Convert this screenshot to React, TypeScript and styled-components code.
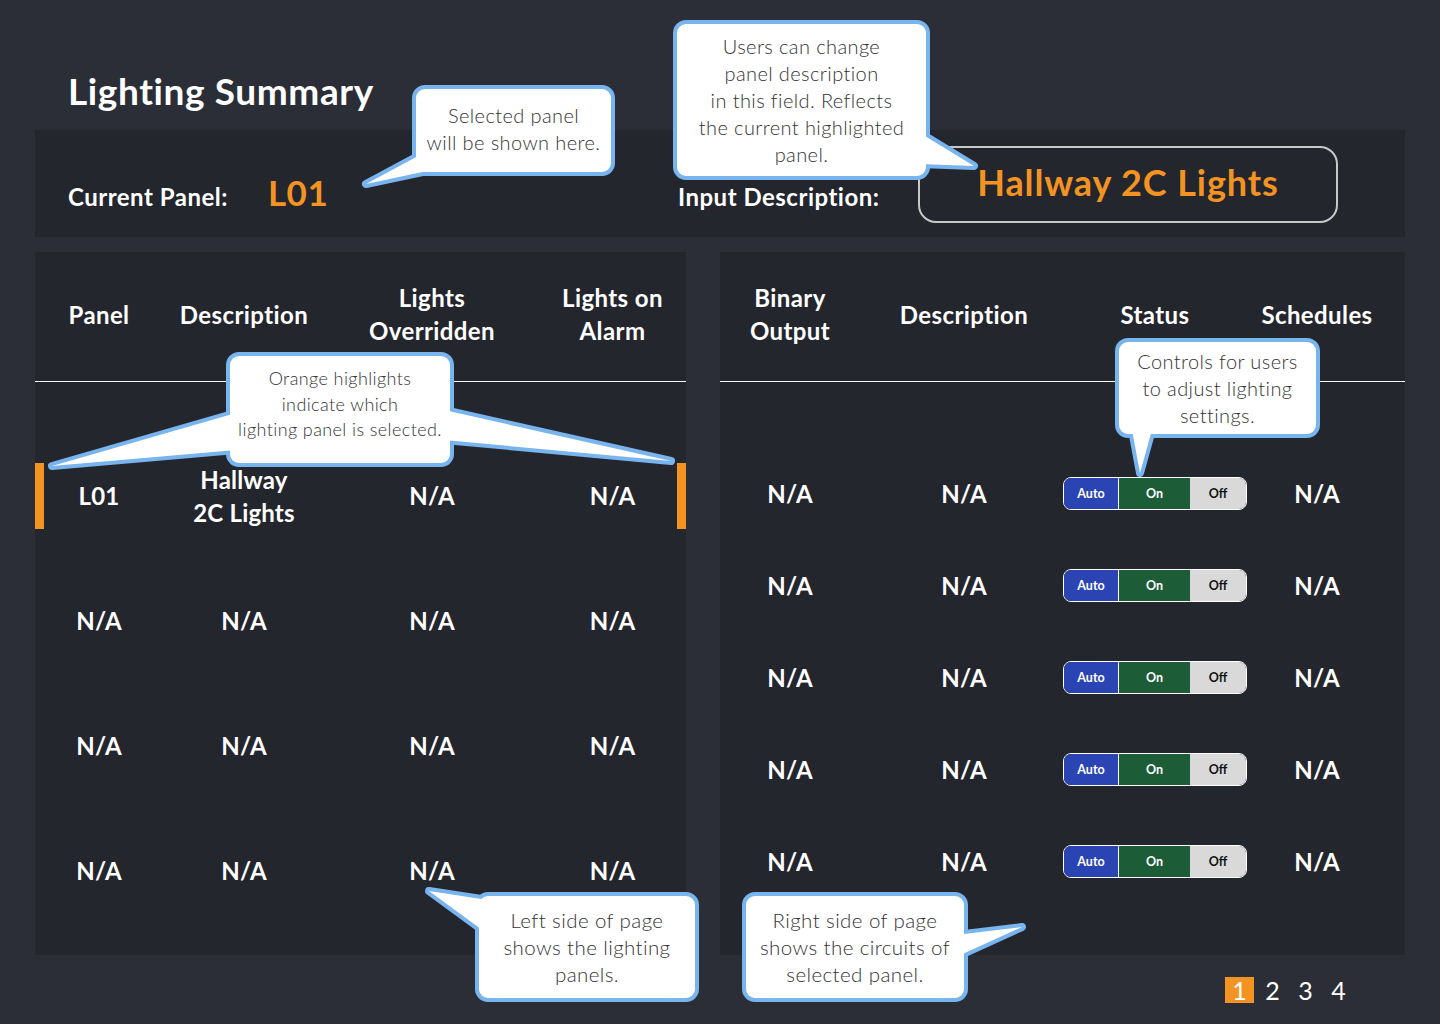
import React from 'react';
import styled, { createGlobalStyle } from 'styled-components';

const ORANGE = '#f39322';
const PAGE_BG = '#2b2e37';
const PANEL_BG = '#24262e';
const CALLOUT_BLUE = '#78b4ee';

const GlobalStyle = createGlobalStyle`
  html, body { margin: 0; padding: 0; background: ${PAGE_BG}; }
  body { font-family: Lato, "Open Sans", "DejaVu Sans", sans-serif; color: #fff; }
  * { box-sizing: border-box; }
`;

const Page = styled.div`
  position: relative;
  width: 1440px;
  height: 1024px;
  padding: 0 35px;
  overflow: hidden;
  background: ${PAGE_BG};
`;

const Title = styled.h1`
  margin: 0 0 18px;
  padding: 69px 0 0 33px;
  font-size: 37px;
  line-height: 43px;
  font-weight: 700;
  letter-spacing: 0.6px;
  color: #fff;
`;

const HeaderCard = styled.section`
  display: flex;
  align-items: flex-end;
  height: 107px;
  padding: 0 67px 14px 33px;
  background: ${PANEL_BG};
`;

const Field = styled.div<{ $width: number; $drop: number }>`
  display: flex;
  align-items: baseline;
  gap: 40px;
  width: ${(p) => p.$width}px;
  margin-bottom: ${(p) => p.$drop}px;
`;

const FieldLabel = styled.span`
  font-size: 24px;
  line-height: 27px;
  font-weight: 700;
  letter-spacing: 0.5px;
`;

const PanelCode = styled.span`
  font-size: 35px;
  line-height: 41px;
  font-weight: 700;
  letter-spacing: 0.5px;
  color: ${ORANGE};
`;

const DescInput = styled.div`
  width: 420px;
  height: 77px;
  padding-bottom: 5px;
  border: 2px solid #c8c8c8;
  border-radius: 18px;
  display: flex;
  align-items: center;
  justify-content: center;
  font-size: 36px;
  letter-spacing: 0.9px;
  font-weight: 700;
  color: ${ORANGE};
`;

const Columns = styled.main`
  display: flex;
  gap: 34px;
  margin-top: 15px;
  height: 703px;
`;

const TablePanel = styled.section<{ $width: number }>`
  flex: 0 0 ${(p) => p.$width}px;
  background: ${PANEL_BG};
`;

const HeadRow = styled.div<{ $cols: string }>`
  display: grid;
  grid-template-columns: ${(p) => p.$cols};
  align-items: center;
  height: 130px;
  padding-bottom: 5px;
  border-bottom: 1px solid #ffffff;
`;

const HeadCell = styled.div`
  text-align: center;
  font-size: 24px;
  line-height: 33px;
  font-weight: 700;
  letter-spacing: 0.4px;
`;

const TableBody = styled.div<{ $top: number }>`
  padding-top: ${(p) => p.$top}px;
`;

const DataRow = styled.div<{ $cols: string; $height: number }>`
  display: grid;
  grid-template-columns: ${(p) => p.$cols};
  grid-template-rows: ${(p) => p.$height}px;
  align-items: center;
`;

const DataCell = styled.div<{ $col: number }>`
  grid-column: ${(p) => p.$col};
  grid-row: 1;
  justify-self: center;
  text-align: center;
  font-size: 24px;
  line-height: 33px;
  font-weight: 700;
  letter-spacing: 0.2px;
`;

const SelectMark = styled.span<{ $side: 'left' | 'right' }>`
  grid-row: 1;
  grid-column: ${(p) => (p.$side === 'left' ? '1' : '4')};
  justify-self: ${(p) => (p.$side === 'left' ? 'start' : 'end')};
  width: 9px;
  height: 66px;
  background: ${ORANGE};
`;

const Toggle = styled.div`
  grid-column: 3;
  grid-row: 1;
  justify-self: center;
  display: flex;
  width: 184px;
  height: 33px;
  border: 1px solid #ffffff;
  border-radius: 8px;
  overflow: hidden;
`;

const toneStyles = {
  auto: { bg: '#2b44b4', fg: '#ffffff', w: 54 },
  on: { bg: '#1c5d38', fg: '#ffffff', w: 72 },
  off: { bg: '#d9d9d9', fg: '#111111', w: 56 },
};

const ToggleSeg = styled.span<{ $tone: 'auto' | 'on' | 'off' }>`
  display: flex;
  align-items: center;
  justify-content: center;
  width: ${(p) => toneStyles[p.$tone].w}px;
  background: ${(p) => toneStyles[p.$tone].bg};
  color: ${(p) => toneStyles[p.$tone].fg};
  border-left: ${(p) => (p.$tone === 'on' ? '1px solid #ffffff' : 'none')};
  font-size: 12.5px;
  font-weight: 700;
`;

const Footer = styled.footer`
  display: flex;
  justify-content: flex-end;
  padding: 22px 52px 0 0;
`;

const Pager = styled.nav`
  display: flex;
  gap: 4px;
`;

const PageNum = styled.span<{ $active?: boolean }>`
  width: 29px;
  height: 26px;
  display: flex;
  align-items: center;
  justify-content: center;
  font-size: 25px;
  line-height: 26px;
  color: #fff;
  background: ${(p) => (p.$active ? ORANGE : 'transparent')};
`;

const Overlay = styled.div`
  position: absolute;
  inset: 0;
  pointer-events: none;
`;

const BubbleArt = styled.svg`
  position: absolute;
  left: 0;
  top: 0;
`;

const Note = styled.div<{ $x: number; $y: number; $w: number; $h: number; $size: number; $lh: number; $lift: number }>`
  position: absolute;
  left: ${(p) => p.$x}px;
  top: ${(p) => p.$y}px;
  width: ${(p) => p.$w}px;
  height: ${(p) => p.$h}px;
  padding-bottom: ${(p) => p.$lift}px;
  display: flex;
  align-items: center;
  justify-content: center;
  text-align: center;
  white-space: nowrap;
  color: #333333;
  font-weight: 300;
  font-size: ${(p) => p.$size}px;
  line-height: ${(p) => p.$lh}px;
  letter-spacing: 0.4px;
`;

type Pt = [number, number];
type Callout = {
  box: { x: number; y: number; w: number; h: number };
  tails: Pt[][];
  lines: string[];
  size: number;
  lh: number;
  lift: number;
};

const callouts: Callout[] = [
  {
    box: { x: 412, y: 85, w: 203, h: 91 },
    tails: [[[420, 155], [366, 184], [432, 170]]],
    lines: ['Selected panel', 'will be shown here.'],
    size: 20,
    lh: 27,
    lift: 4,
  },
  {
    box: { x: 673, y: 20, w: 257, h: 160 },
    tails: [[[920, 133], [974, 166], [920, 164]]],
    lines: ['Users can change', 'panel description', 'in this field. Reflects', 'the current highlighted', 'panel.'],
    size: 20,
    lh: 27,
    lift: 0,
  },
  {
    box: { x: 1115, y: 338, w: 205, h: 100 },
    tails: [[[1132, 430], [1140, 473], [1152, 430]]],
    lines: ['Controls for users', 'to adjust lighting', 'settings.'],
    size: 20,
    lh: 27,
    lift: 0,
  },
  {
    box: { x: 226, y: 352, w: 228, h: 115 },
    tails: [
      [[236, 413], [52, 466], [236, 450]],
      [[444, 410], [671, 461], [444, 440]],
    ],
    lines: ['Orange highlights', 'indicate which', 'lighting panel is selected.'],
    size: 18,
    lh: 25.5,
    lift: 10,
  },
  {
    box: { x: 475, y: 892, w: 224, h: 110 },
    tails: [[[488, 900], [429, 891], [485, 932]]],
    lines: ['Left side of page', 'shows the lighting', 'panels.'],
    size: 20.5,
    lh: 27,
    lift: 0,
  },
  {
    box: { x: 742, y: 892, w: 226, h: 110 },
    tails: [[[956, 935], [1022, 927], [956, 957]]],
    lines: ['Right side of page', 'shows the circuits of', 'selected panel.'],
    size: 20.5,
    lh: 27,
    lift: 0,
  },
];

const BubbleShape: React.FC<{ c: Callout; fill: string; stroke?: boolean }> = ({ c, fill, stroke }) => (
  <g
    fill={fill}
    stroke={stroke ? fill : 'none'}
    strokeWidth={stroke ? 8 : 0}
    strokeLinejoin="round"
  >
    <rect x={c.box.x + 4} y={c.box.y + 4} width={c.box.w - 8} height={c.box.h - 8} rx={9} />
    {c.tails.map((t, i) => (
      <polygon key={i} points={t.map((p) => p.join(',')).join(' ')} />
    ))}
  </g>
);

const LEFT_COLS = '128px 162px 214px 147px';
const RIGHT_COLS = '140px 208px 174px 150px 1fr';

const leftRows = [
  { panel: 'L01', desc: ['Hallway', '2C Lights'], over: 'N/A', alarm: 'N/A', selected: true },
  { panel: 'N/A', desc: ['N/A'], over: 'N/A', alarm: 'N/A', selected: false },
  { panel: 'N/A', desc: ['N/A'], over: 'N/A', alarm: 'N/A', selected: false },
  { panel: 'N/A', desc: ['N/A'], over: 'N/A', alarm: 'N/A', selected: false },
];

const rightRows = Array.from({ length: 5 }, () => ({ output: 'N/A', desc: 'N/A', sched: 'N/A' }));

export default function App() {
  return (
    <>
      <GlobalStyle />
      <Page>
        <Title>Lighting Summary</Title>
        <HeaderCard>
          <Field $width={610} $drop={10}>
            <FieldLabel>Current Panel:</FieldLabel>
            <PanelCode>L01</PanelCode>
          </Field>
          <Field $width={240} $drop={13}>
            <FieldLabel>Input Description:</FieldLabel>
          </Field>
          <DescInput>Hallway 2C Lights</DescInput>
        </HeaderCard>

        <Columns>
          <TablePanel $width={651}>
            <HeadRow $cols={LEFT_COLS}>
              <HeadCell>Panel</HeadCell>
              <HeadCell>Description</HeadCell>
              <HeadCell>
                Lights
                <br />
                Overridden
              </HeadCell>
              <HeadCell>
                Lights on
                <br />
                Alarm
              </HeadCell>
            </HeadRow>
            <TableBody $top={51}>
              {leftRows.map((r, i) => (
                <DataRow key={i} $cols={LEFT_COLS} $height={125}>
                  {r.selected && <SelectMark $side="left" />}
                  <DataCell $col={1}>{r.panel}</DataCell>
                  <DataCell $col={2}>
                    {r.desc.map((d, j) => (
                      <React.Fragment key={j}>
                        {j > 0 && <br />}
                        {d}
                      </React.Fragment>
                    ))}
                  </DataCell>
                  <DataCell $col={3}>{r.over}</DataCell>
                  <DataCell $col={4}>{r.alarm}</DataCell>
                  {r.selected && <SelectMark $side="right" />}
                </DataRow>
              ))}
            </TableBody>
          </TablePanel>

          <TablePanel $width={685}>
            <HeadRow $cols={RIGHT_COLS}>
              <HeadCell>
                Binary
                <br />
                Output
              </HeadCell>
              <HeadCell>Description</HeadCell>
              <HeadCell>Status</HeadCell>
              <HeadCell>Schedules</HeadCell>
            </HeadRow>
            <TableBody $top={65}>
              {rightRows.map((r, i) => (
                <DataRow key={i} $cols={RIGHT_COLS} $height={92}>
                  <DataCell $col={1}>{r.output}</DataCell>
                  <DataCell $col={2}>{r.desc}</DataCell>
                  <Toggle>
                    <ToggleSeg $tone="auto">Auto</ToggleSeg>
                    <ToggleSeg $tone="on">On</ToggleSeg>
                    <ToggleSeg $tone="off">Off</ToggleSeg>
                  </Toggle>
                  <DataCell $col={4}>{r.sched}</DataCell>
                </DataRow>
              ))}
            </TableBody>
          </TablePanel>
        </Columns>

        <Footer>
          <Pager>
            <PageNum $active>1</PageNum>
            <PageNum>2</PageNum>
            <PageNum>3</PageNum>
            <PageNum>4</PageNum>
          </Pager>
        </Footer>

        <Overlay>
          <BubbleArt width={1440} height={1024} viewBox="0 0 1440 1024">
            {callouts.map((c, i) => (
              <g key={i}>
                <BubbleShape c={c} fill={CALLOUT_BLUE} stroke />
                <BubbleShape c={c} fill="#ffffff" />
              </g>
            ))}
          </BubbleArt>
          {callouts.map((c, i) => (
            <Note
              key={i}
              $x={c.box.x}
              $y={c.box.y}
              $w={c.box.w}
              $h={c.box.h}
              $size={c.size}
              $lh={c.lh}
              $lift={c.lift}
            >
              <div>
                {c.lines.map((l, j) => (
                  <React.Fragment key={j}>
                    {j > 0 && <br />}
                    {l}
                  </React.Fragment>
                ))}
              </div>
            </Note>
          ))}
        </Overlay>
      </Page>
    </>
  );
}
